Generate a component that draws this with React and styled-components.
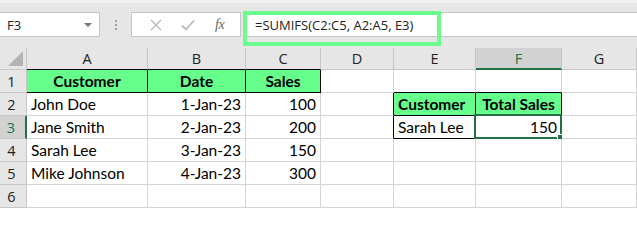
import React from 'react';
import styled, { createGlobalStyle } from 'styled-components';

const GlobalStyle = createGlobalStyle`
  html, body {
    margin: 0;
    padding: 0;
    background: #ffffff;
    overflow: hidden;
  }
  body {
    font-family: Lato, "Open Sans", sans-serif;
  }
`;

const GREEN = '#217346';
const FILL = '#66ff8c';
const GRID = '#d4d4d4';

const Page = styled.div`
  width: 637px;
  height: 209px;
  position: relative;
  background: #ffffff;
`;

const Toolbar = styled.div`
  height: 48px;
  box-sizing: border-box;
  background: #e6e6e6;
  border-top: 3px solid #f1f1f1;
  padding-top: 9px;
  display: flex;
  align-items: flex-start;
  position: relative;
`;

const NameBox = styled.div`
  width: 100px;
  height: 25px;
  box-sizing: border-box;
  background: #fff;
  border: 1px solid #c6c6c6;
  border-left: none;
  display: flex;
  align-items: center;
  justify-content: space-between;
  padding: 0 7px 0 7px;
  font-family: "Open Sans", "Noto Sans", sans-serif;
  font-size: 13px;
  color: #222;
`;

const Caret = styled.span`
  width: 0;
  height: 0;
  border-left: 4px solid transparent;
  border-right: 4px solid transparent;
  border-top: 4px solid #777;
`;

const Dots = styled.div`
  width: 31px;
  height: 25px;
  display: flex;
  flex-direction: column;
  align-items: center;
  justify-content: center;
  gap: 2px;

  span {
    width: 2px;
    height: 2px;
    background: #a0a0a0;
  }
`;

const FxBox = styled.div`
  width: 110px;
  height: 25px;
  box-sizing: border-box;
  background: #fff;
  border: 1px solid #c6c6c6;
  display: flex;
  align-items: center;
  justify-content: space-around;
  padding: 0 6px 0 8px;
`;

const FxLabel = styled.span`
  font-family: "Liberation Serif", serif;
  font-style: italic;
  font-size: 14px;
  color: #666;
  letter-spacing: -0.5px;
`;

const FormulaField = styled.div`
  flex: 1;
  height: 25px;
  box-sizing: border-box;
  margin-left: 2px;
  background: #fff;
  border: 1px solid #c6c6c6;
  border-right: none;
  display: flex;
  align-items: center;
  padding-left: 11px;
  font-family: "Open Sans", "Noto Sans", sans-serif;
  font-size: 13px;
  color: #222;
`;

const Highlight = styled.div`
  position: absolute;
  left: 243px;
  top: 8px;
  width: 198px;
  height: 35px;
  box-sizing: border-box;
  border: 4px solid #6bfb8f;
  pointer-events: none;
`;

const Sheet = styled.div`
  display: grid;
  grid-template-columns: 27px 121px 98px 75px 73px 82px 86px 75px;
  grid-template-rows: 22px repeat(6, 23px);
`;

const Corner = styled.div`
  background: #e6e6e6;
  border-right: 1px solid #c6c6c6;
  border-bottom: 1px solid #c6c6c6;
  display: flex;
  align-items: flex-end;
  justify-content: flex-end;
  padding: 0 3px 3px 0;
`;

const ColHead = styled.div`
  background: ${p => (p.$active ? '#d2d2d2' : '#e6e6e6')};
  color: ${p => (p.$active ? GREEN : '#222')};
  border-right: 1px solid #c6c6c6;
  border-bottom: ${p => (p.$active ? `2px solid ${GREEN}` : `1px solid ${p.$under || '#c6c6c6'}`)};
  display: flex;
  align-items: center;
  justify-content: center;
  font-family: "Open Sans", "Noto Sans", sans-serif;
  font-size: 14.5px;
`;

const RowHead = styled.div`
  background: ${p => (p.$active ? '#d2d2d2' : '#e6e6e6')};
  color: ${p => (p.$active ? GREEN : '#222')};
  border-right: ${p => (p.$active ? `2px solid ${GREEN}` : '1px solid #c6c6c6')};
  border-bottom: 1px solid #c6c6c6;
  display: flex;
  align-items: center;
  justify-content: center;
  padding-right: 3px;
  font-family: "Open Sans", "Noto Sans", sans-serif;
  font-size: 14.5px;
`;

const Cell = styled.div`
  position: relative;
  background: ${p => (p.$fill ? FILL : '#fff')};
  border-right: 1px solid ${p => p.$rb || GRID};
  border-bottom: 1px solid ${p => p.$bb || GRID};
  display: flex;
  align-items: center;
  justify-content: ${p => (p.$align === 'right' ? 'flex-end' : p.$align === 'center' ? 'center' : 'flex-start')};
  padding: 0 4px;
  font-size: 15.5px;
  font-weight: ${p => (p.$bold ? 700 : 400)};
  color: #000;
  white-space: nowrap;
  overflow: visible;
`;

const Selection = styled.div`
  position: absolute;
  left: -2px;
  top: -2px;
  right: -1px;
  bottom: -1px;
  border: 2px solid ${GREEN};
  pointer-events: none;

  &::after {
    content: '';
    position: absolute;
    right: -4px;
    bottom: -4px;
    width: 5px;
    height: 5px;
    background: ${GREEN};
    border: 1px solid #fff;
  }
`;

const cols = ['A', 'B', 'C', 'D', 'E', 'F', 'G'];

const data = [
  ['John Doe', '1-Jan-23', '100'],
  ['Jane Smith', '2-Jan-23', '200'],
  ['Sarah Lee', '3-Jan-23', '150'],
  ['Mike Johnson', '4-Jan-23', '300'],
];

function Cross() {
  return (
    <svg width="12" height="12" viewBox="0 0 12 12">
      <path d="M1 1 L11 11 M11 1 L1 11" stroke="#b9b9b9" strokeWidth="1.4" fill="none" />
    </svg>
  );
}

function Check() {
  return (
    <svg width="14" height="12" viewBox="0 0 14 12">
      <path d="M1 6.5 L5 10.5 L13 1.5" stroke="#b9b9b9" strokeWidth="1.8" fill="none" />
    </svg>
  );
}

function SelectAll() {
  return (
    <svg width="15" height="15" viewBox="0 0 15 15">
      <polygon points="15,0 15,15 0,15" fill="#b4b4b4" />
    </svg>
  );
}

function Row({ n }) {
  // n: sheet row number 2..6
  const d = data[n - 2];
  const cells = [];
  for (let c = 0; c < 7; c++) {
    let props = {};
    let text = '';
    if (d && c < 3) {
      text = d[c];
      props.$align = c === 0 ? 'left' : 'right';
    }
    if (c === 3 && (n === 2 || n === 3)) props.$rb = '#000';
    if (c === 4 && n === 2) {
      text = 'Customer';
      props = { ...props, $fill: true, $bold: true, $rb: '#000', $bb: '#000' };
    }
    if (c === 5 && n === 2) {
      text = 'Total Sales';
      props = { ...props, $fill: true, $bold: true, $rb: '#000', $bb: '#000', $align: 'center' };
    }
    if (c === 4 && n === 3) {
      text = 'Sarah Lee';
      props = { ...props, $rb: '#000', $bb: '#000' };
    }
    if (c === 5 && n === 3) {
      text = '150';
      props = { ...props, $rb: '#000', $bb: '#000', $align: 'right' };
    }
    cells.push(
      <Cell key={c} {...props}>
        {text}
        {c === 5 && n === 3 && <Selection />}
      </Cell>
    );
  }
  return (
    <>
      <RowHead $active={n === 3}>{n}</RowHead>
      {cells}
    </>
  );
}

export default function App() {
  return (
    <Page>
      <GlobalStyle />
      <Toolbar>
        <NameBox>
          F3
          <Caret />
        </NameBox>
        <Dots>
          <span />
          <span />
          <span />
        </Dots>
        <FxBox>
          <Cross />
          <Check />
          <FxLabel>fx</FxLabel>
        </FxBox>
        <FormulaField>=SUMIFS(C2:C5, A2:A5, E3)</FormulaField>
        <Highlight />
      </Toolbar>
      <Sheet>
        <Corner>
          <SelectAll />
        </Corner>
        {cols.map((c, i) => (
          <ColHead key={c} $active={c === 'F'} $under={i < 3 ? '#000' : undefined}>
            {c}
          </ColHead>
        ))}

        <RowHead>1</RowHead>
        <Cell $fill $bold $align="center" $rb="#000" $bb="#000">Customer</Cell>
        <Cell $fill $bold $align="center" $rb="#000" $bb="#000">Date</Cell>
        <Cell $fill $bold $align="center" $rb="#000" $bb="#000">Sales</Cell>
        <Cell />
        <Cell $bb="#000" />
        <Cell $bb="#000" />
        <Cell />

        {[2, 3, 4, 5, 6].map(n => (
          <Row key={n} n={n} />
        ))}
      </Sheet>
    </Page>
  );
}
